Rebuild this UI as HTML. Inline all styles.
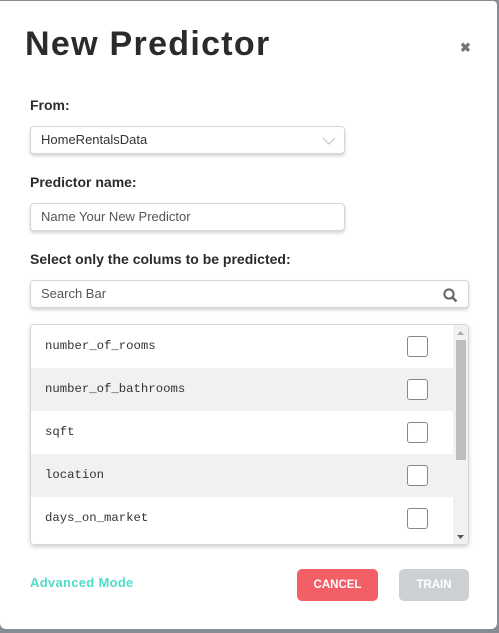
<!DOCTYPE html>
<html><head><style>
body{margin:0;width:499px;height:633px;background:#868c92;position:relative;overflow:hidden;font-family:"Liberation Sans",sans-serif;}
.m{position:absolute;left:0;top:1px;width:497px;height:628px;background:#fff;border-radius:0 4px 6px 6px;}
.t{position:absolute;left:25px;top:24px;font-size:34px;font-weight:bold;color:#2b2b2b;letter-spacing:1.3px}
.x{position:absolute;left:460px;top:39px;font-size:13px;font-weight:bold;color:#777}
.l{position:absolute;left:30px;font-size:14px;font-weight:bold;color:#2b2b2b}
.in{position:absolute;left:30px;height:28px;border:1px solid #d6d6d6;border-radius:4px;box-shadow:0 2px 3px rgba(0,0,0,.18);box-sizing:border-box;font-size:13px;color:#333;padding-left:10px;line-height:26px;background:#fff}
.list{position:absolute;left:30px;top:323px;width:439px;height:221px;border:1px solid #d6d6d6;border-radius:4px;box-shadow:0 2px 4px rgba(0,0,0,.18);box-sizing:border-box;overflow:hidden}
.r{height:43px;width:423px;position:relative;font-family:"Liberation Mono",monospace;font-size:12.3px;color:#333;line-height:43px;padding-left:14px;box-sizing:border-box}
.r:nth-child(even){background:#f1f1f1}
.cb{position:absolute;left:376px;top:11px;width:19px;height:19px;border:1px solid #888;border-radius:3px;background:#fff}
.sb{position:absolute;right:0;top:0;width:15px;height:219px;background:#f1f1f1}
.th{position:absolute;left:3px;top:15px;width:10px;height:120px;background:#bdbdbd}
.btn{position:absolute;top:568px;height:32px;border-radius:5px;color:#fff;font-weight:bold;font-size:11.5px;text-align:center;line-height:32px}
</style></head><body>
<div class="m">
<div class="t">New Predictor</div>
<div class="x">✖</div>
<div class="l" style="top:96px">From:</div>
<div class="in" style="top:125px;width:315px">HomeRentalsData
<svg style="position:absolute;right:8px;top:10px" width="14" height="8"><path d="M1 1L7 7L13 1" stroke="#ccc" fill="none" stroke-width="1.3"/></svg></div>
<div class="l" style="top:173px">Predictor name:</div>
<div class="in" style="top:202px;width:315px;color:#555">Name Your New Predictor</div>
<div class="l" style="top:250px">Select only the colums to be predicted:</div>
<div class="in" style="top:279px;width:439px;color:#555">Search Bar
<svg style="position:absolute;right:10px;top:7px" width="15" height="15"><circle cx="6" cy="6" r="4.6" stroke="#666" stroke-width="2" fill="none"/><path d="M9.5 9.5L13.5 13.5" stroke="#666" stroke-width="2.4"/></svg></div>
<div class="list">
<div class="r">number_of_rooms<div class="cb"></div></div>
<div class="r">number_of_bathrooms<div class="cb"></div></div>
<div class="r">sqft<div class="cb"></div></div>
<div class="r">location<div class="cb"></div></div>
<div class="r">days_on_market<div class="cb"></div></div>
<div class="sb"><div class="th"></div>
<svg style="position:absolute;left:4px;top:6px" width="7" height="4"><path d="M0 4L3.5 0L7 4Z" fill="#aaa"/></svg>
<svg style="position:absolute;left:4px;top:210px" width="7" height="4"><path d="M0 0L3.5 4L7 0Z" fill="#555"/></svg></div>
</div>
<div style="position:absolute;left:30px;top:574px;font-size:13px;font-weight:bold;color:#4fdcc9;letter-spacing:0.3px">Advanced Mode</div>
<div class="btn" style="left:297px;width:81px;background:#f25f66">CANCEL</div>
<div class="btn" style="left:399px;width:70px;background:#cdd0d3">TRAIN</div>
</div>
</body></html>
